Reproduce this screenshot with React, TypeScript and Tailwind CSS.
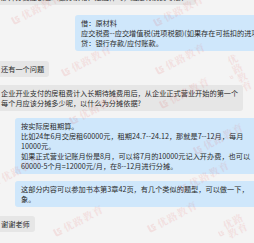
import React from 'react';

const marks = [
  'left-[8px] top-[4px]',
  'left-[150px] top-[6px]',
  'left-[58px] top-[56px]',
  'left-[152px] top-[54px]',
  'left-[228px] top-[52px]',
  'left-[156px] top-[88px]',
  'left-[66px] top-[104px]',
  'left-[190px] top-[134px]',
  'left-[-12px] top-[166px]',
  'left-[176px] top-[172px]',
  'left-[50px] top-[216px]',
  'left-[144px] top-[212px]',
  'left-[216px] top-[216px]',
];

const Watermark: React.FC<{ pos: string }> = ({ pos }) => (
  <div className={`absolute ${pos} flex items-center gap-[2px] -rotate-[28deg] pointer-events-none select-none text-[#e34d4d] opacity-[0.12]`}>
    <svg className="w-[10px] h-[10px]" viewBox="0 0 20 20" fill="currentColor">
      <path d="M3 2h4v11c0 1 .5 1.5 1.5 1.5H17V18H7c-2.5 0-4-1.5-4-4V2z" />
      <path d="M10 4h7v3h-4v2h2c2 0 3 1 3 2.5S17 14 15 14h-4v-2.5h3.5c.5 0 .5-.8 0-.8H10V4z" />
    </svg>
    <span className="text-[10px] font-bold tracking-[1px] font-['Noto_Serif_CJK_SC','Noto_Sans_CJK_SC',serif]">优路教育</span>
  </div>
);

const GrayBubble: React.FC<{ lines: string[]; className?: string }> = ({ lines, className = '' }) => (
  <div className={`ml-[-5px] self-start bg-[#e6e6e6] rounded-[3px] pl-[6px] pr-[5px] py-[3px] ${className}`}>
    {lines.map((l, i) => (
      <div key={i} className="whitespace-nowrap">{l}</div>
    ))}
  </div>
);

const BlueBubble: React.FC<{ lines: string[]; className?: string }> = ({ lines, className = '' }) => (
  <div className={`self-start bg-[#cfe7fb] rounded-[3px] pl-[6px] pr-[40px] py-[3px] ${className}`}>
    {lines.map((l, i) => (
      <div key={i} className="whitespace-nowrap">{l}</div>
    ))}
  </div>
);

export default function App() {
  return (
    <div className="relative w-[254px] h-[243px] overflow-hidden bg-[#f4f4f4] text-[#2b2b2b] text-[7.2px] leading-[10px] font-['Noto_Sans_CJK_SC',sans-serif]">
      <div className="flex flex-col">
        <GrayBubble className="mt-[-11px] pr-[8px]" lines={['那开办费应该怎么做分录呢？是这样吗，还是有别的写法？']} />
        <BlueBubble
          className="ml-[75px] mt-[10px]"
          lines={[
            '借：原材料',
            '应交税费--应交增值税(进项税额)(如果存在可抵扣的进项税额)',
            '贷：银行存款/应付账款。',
          ]}
        />
        <GrayBubble className="mt-[10px]" lines={['还有一个问题']} />
        <GrayBubble
          className="mt-[8px]"
          lines={[
            '企业开业支付的房租费计入长期待摊费用后，从企业正式营业开始的第一个',
            '每个月应该分摊多少呢，以什么为分摊依据?',
          ]}
        />
        <BlueBubble
          className="ml-[15px] mt-[7px]"
          lines={[
            '按实际房租期算。',
            '比如24年6月交房租60000元，租期24.7--24.12，那就是7--12月，每月',
            '10000元。',
            '如果正式营业记账月份是8月，可以将7月的10000元记入开办费，也可以',
            '60000-5个月=12000元/月，在8--12月进行分摊。',
          ]}
        />
        <BlueBubble
          className="ml-[15px] mt-[7px]"
          lines={['这部分内容可以参加书本第3章42页，有几个类似的题型，可以做一下，', '象。']}
        />
        <GrayBubble className="mt-[9px]" lines={['谢谢老师']} />
      </div>
      {marks.map((m, i) => (
        <Watermark key={i} pos={m} />
      ))}
    </div>
  );
}
